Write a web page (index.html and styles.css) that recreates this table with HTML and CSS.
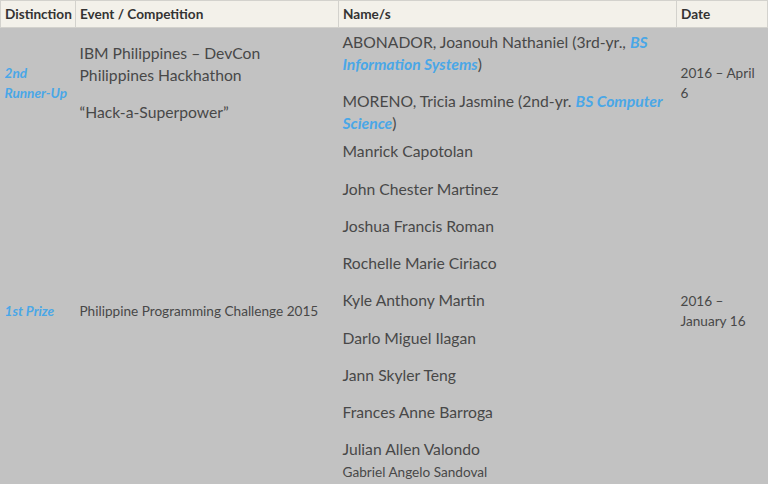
FILE: index.html
```html
<!DOCTYPE html>
<html>
<head>
<meta charset="utf-8">
<link rel="stylesheet" href="styles.css">
</head>
<body>
<table class="awards">
  <colgroup>
    <col class="c-dist">
    <col class="c-event">
    <col class="c-names">
    <col class="c-date">
  </colgroup>
  <thead>
    <tr>
      <th>Distinction</th>
      <th>Event / Competition</th>
      <th>Name/s</th>
      <th>Date</th>
    </tr>
  </thead>
  <tbody>
    <tr>
      <td class="dist">2nd <span class="nowrap">Runner-Up</span></td>
      <td class="event">
        <p>IBM Philippines – DevCon Philippines Hackhathon</p>
        <p>“Hack-a-Superpower”</p>
      </td>
      <td class="names">
        <p>ABONADOR, Joanouh Nathaniel (3rd-yr., <a class="link">BS Information Systems</a>)</p>
        <p>MORENO, Tricia Jasmine (2nd-yr. <a class="link">BS Computer Science</a>)</p>
      </td>
      <td class="date">2016 – April 6</td>
    </tr>
    <tr>
      <td class="dist">1st Prize</td>
      <td class="event small">Philippine Programming Challenge 2015</td>
      <td class="names">
        <p>Manrick Capotolan</p>
        <p>John Chester Martinez</p>
        <p>Joshua Francis Roman</p>
        <p>Rochelle Marie Ciriaco</p>
        <p>Kyle Anthony Martin</p>
        <p>Darlo Miguel Ilagan</p>
        <p>Jann Skyler Teng</p>
        <p>Frances Anne Barroga</p>
        <p>Julian Allen Valondo<br><span class="sub">Gabriel Angelo Sandoval</span></p>
      </td>
      <td class="date">2016 – January 16</td>
    </tr>
  </tbody>
</table>
</body>
</html>
```
FILE: styles.css
```css
html, body {
  margin: 0;
  padding: 0;
  background: #c2c2c2;
}
body {
  font-family: Lato, "Open Sans", sans-serif;
  color: #484848;
}
.awards {
  border-collapse: collapse;
  width: 767px;
  table-layout: fixed;
}
.c-dist { width: 75px; }
.c-event { width: 263px; }
.c-names { width: 338px; }
.c-date { width: 91px; }
.awards th {
  background: #f3f1ea;
  border: 1px solid #d3d2cd;
  font-size: 13.6px;
  font-weight: 700;
  color: #333;
  text-align: left;
  padding: 4px 4px;
  height: 18px;
  line-height: 18px;
  white-space: nowrap;
}
.awards td {
  vertical-align: middle;
  padding: 3px 4px;
  font-size: 15.7px;
  line-height: 22px;
}
.awards td p {
  margin: 0 0 15.25px;
}
.awards td p:last-child {
  margin-bottom: 0;
}
.nowrap {
  white-space: nowrap;
}
.awards td.dist {
  color: #4aa7e7;
  font-style: italic;
  font-weight: 700;
  font-size: 13.6px;
  line-height: 20px;
}
.awards td.small {
  font-size: 13.6px;
}
.awards td.date {
  font-size: 13.6px;
  line-height: 20px;
}
.link {
  color: #4aa7e7;
  font-style: italic;
  font-weight: 700;
}
.sub {
  font-size: 13.6px;
  line-height: 20px;
}
```
